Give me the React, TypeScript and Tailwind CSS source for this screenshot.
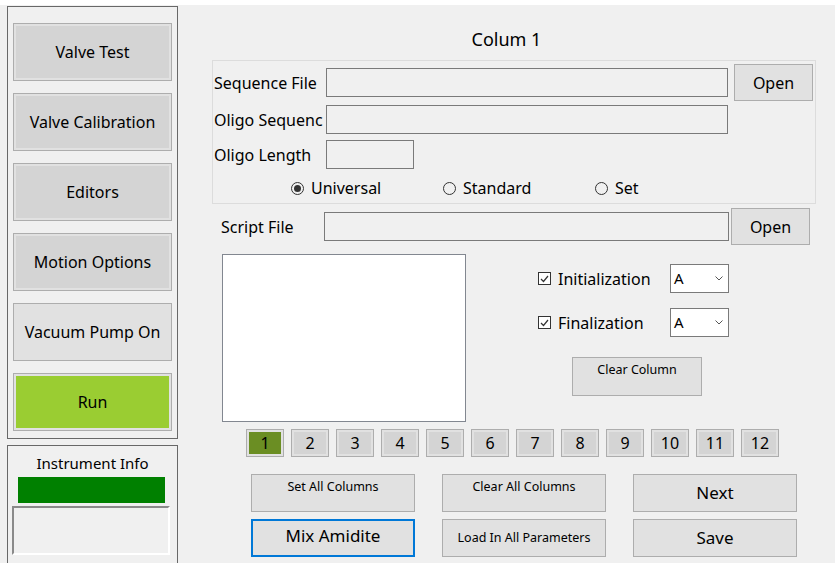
import React from "react";

const FONT = "font-['Noto_Sans','Open_Sans',sans-serif]";

function SideButton({ label, fill }: { label: string; fill: string }) {
  return (
    <div className="h-[58px] shrink-0 border border-[#adadad] bg-[#e1e1e1] p-[2px]">
      <div className={`flex h-full items-center justify-center text-[16px] text-black ${fill}`}>{label}</div>
    </div>
  );
}

function WinButton({
  label,
  className,
  textClass = "items-center text-[16px]",
}: {
  label: string;
  className: string;
  textClass?: string;
}) {
  return (
    <div className={`flex shrink-0 justify-center border border-[#adadad] bg-[#e1e1e1] text-black ${className} ${textClass}`}>
      {label}
    </div>
  );
}

function TextBox({ className }: { className: string }) {
  return <div className={`shrink-0 border border-[#7a7a7a] bg-[#f0f0f0] ${className}`} />;
}

function Radio({ label, checked }: { label: string; checked?: boolean }) {
  return (
    <div className="flex w-[152px] items-center">
      <span className="flex h-[13px] w-[13px] items-center justify-center rounded-full border border-[#333]">
        {checked && <span className="h-[7px] w-[7px] rounded-full bg-[#333]" />}
      </span>
      <span className="ml-[7px] text-[16px] leading-[20px]">{label}</span>
    </div>
  );
}

function CheckRow({ label, className }: { label: string; className: string }) {
  return (
    <div className={`flex h-[29px] items-center ${className}`}>
      <div className="flex w-[132px] items-center">
        <span className="flex h-[13px] w-[13px] items-center justify-center border border-[#333] bg-white">
          <svg width="9" height="8" viewBox="0 0 9 8">
            <polyline points="1,4 3.5,6.5 8,1" fill="none" stroke="#333" strokeWidth="1.2" />
          </svg>
        </span>
        <span className="ml-[7px] text-[16px]">{label}</span>
      </div>
      <div className="flex h-[29px] w-[59px] items-center justify-between border border-[#7a7a7a] bg-white pl-[3px] pr-[5px] text-[15px]">
        <span>A</span>
        <svg width="8" height="5" viewBox="0 0 8 5">
          <polyline points="0.5,0.5 4,4 7.5,0.5" fill="none" stroke="#555" strokeWidth="1" />
        </svg>
      </div>
    </div>
  );
}

function NumButton({ n, active }: { n: number; active?: boolean }) {
  return (
    <div className="h-[28px] w-[38px] border border-[#adadad] bg-[#e1e1e1] p-[2px]">
      <div className={`flex h-full items-center justify-center text-[16px] ${active ? "bg-[#6b8e23]" : "bg-[#d4d4d4]"}`}>
        {n}
      </div>
    </div>
  );
}

export default function App() {
  return (
    <div className={`flex h-[563px] w-[835px] overflow-hidden border-t-[5px] border-white bg-[#f0f0f0] text-black ${FONT}`}>
      {/* left side */}
      <div className="ml-[7px] mt-[1px] flex w-[171px] shrink-0 flex-col">
        <div className="flex h-[433px] shrink-0 flex-col gap-[12px] border border-[#686868] px-[5px] pt-[16px]">
          <SideButton label="Valve Test" fill="bg-[#d4d4d4]" />
          <SideButton label="Valve Calibration" fill="bg-[#d4d4d4]" />
          <SideButton label="Editors" fill="bg-[#d4d4d4]" />
          <SideButton label="Motion Options" fill="bg-[#d4d4d4]" />
          <SideButton label="Vacuum Pump On" fill="bg-[#e1e1e1]" />
          <SideButton label="Run" fill="bg-[#9acd32]" />
        </div>
        <div className="mt-[6px] flex h-[140px] shrink-0 flex-col border border-[#686868]">
          <div className="mt-[7px] text-center text-[15px] leading-[20px]">Instrument Info</div>
          <div className="ml-[10px] mt-[4px] h-[26px] w-[147px] bg-[#008000]" />
          <div className="ml-[4px] mt-[3px] h-[49px] w-[158px] border-2 border-b-white border-l-[#8a8a8a] border-r-white border-t-[#8a8a8a] bg-[#f0f0f0]" />
        </div>
      </div>

      {/* right side */}
      <div className="flex w-[657px] flex-col">
        <div className="h-[55px] shrink-0 pt-[23px] text-center text-[18px] leading-[22px]">Colum 1</div>

        <div className="ml-[34px] flex h-[144px] w-[604px] shrink-0 flex-col border border-[#dcdcdc]">
          <div className="mt-[3px] flex h-[37px] items-center">
            <span className="w-[113px] whitespace-nowrap pl-[1px] text-[16px]">Sequence File</span>
            <TextBox className="h-[29px] w-[402px]" />
            <WinButton label="Open" className="ml-[6px] h-[37px] w-[79px]" />
          </div>
          <div className="mt-[4px] flex h-[29px] items-center">
            <span className="w-[113px] whitespace-nowrap pl-[1px] text-[16px]">Oligo Sequenc</span>
            <TextBox className="h-[29px] w-[402px]" />
          </div>
          <div className="mt-[6px] flex h-[29px] items-center">
            <span className="w-[113px] whitespace-nowrap pl-[1px] text-[16px]">Oligo Length</span>
            <TextBox className="h-[29px] w-[88px]" />
          </div>
          <div className="ml-[78px] mt-[9px] flex h-[20px] items-center">
            <Radio label="Universal" checked />
            <Radio label="Standard" />
            <Radio label="Set" />
          </div>
        </div>

        <div className="mt-[4px] flex h-[37px] shrink-0 items-center">
          <span className="ml-[43px] w-[103px] text-[16px]">Script File</span>
          <TextBox className="h-[29px] w-[405px]" />
          <WinButton label="Open" className="ml-[2px] h-[37px] w-[79px]" />
        </div>

        <div className="mt-[9px] flex shrink-0">
          <div className="ml-[44px] h-[168px] w-[244px] border border-[#828790] bg-white" />
          <div className="ml-[72px] flex flex-col">
            <CheckRow label="Initialization" className="mt-[10px]" />
            <CheckRow label="Finalization" className="mt-[15px]" />
            <WinButton
              label="Clear Column"
              className="ml-[34px] mt-[20px] h-[39px] w-[130px]"
              textClass="items-start pt-[3px] text-[12.5px]"
            />
          </div>
        </div>

        <div className="ml-[68px] mt-[7px] flex shrink-0 gap-[7px]">
          {[1, 2, 3, 4, 5, 6, 7, 8, 9, 10, 11, 12].map((n) => (
            <NumButton key={n} n={n} active={n === 1} />
          ))}
        </div>

        <div className="ml-[73px] mt-[17px] grid w-[546px] shrink-0 grid-cols-[164px_164px_164px] gap-x-[27px] gap-y-[7px]">
          <WinButton label="Set All Columns" className="h-[38px]" textClass="items-start pt-[3px] text-[12.5px]" />
          <WinButton label="Clear All Columns" className="h-[38px]" textClass="items-start pt-[3px] text-[12.5px]" />
          <WinButton label="Next" className="h-[38px]" textClass="items-center text-[17px]" />
          <div className="flex h-[38px] items-start justify-center border-2 border-[#0078d7] bg-[#e1e1e1] pt-[2px] text-[17px]">
            Mix Amidite
          </div>
          <WinButton label="Load In All Parameters" className="h-[38px]" textClass="items-center text-[12.5px]" />
          <WinButton label="Save" className="h-[38px]" textClass="items-center text-[17px]" />
        </div>
      </div>
    </div>
  );
}
